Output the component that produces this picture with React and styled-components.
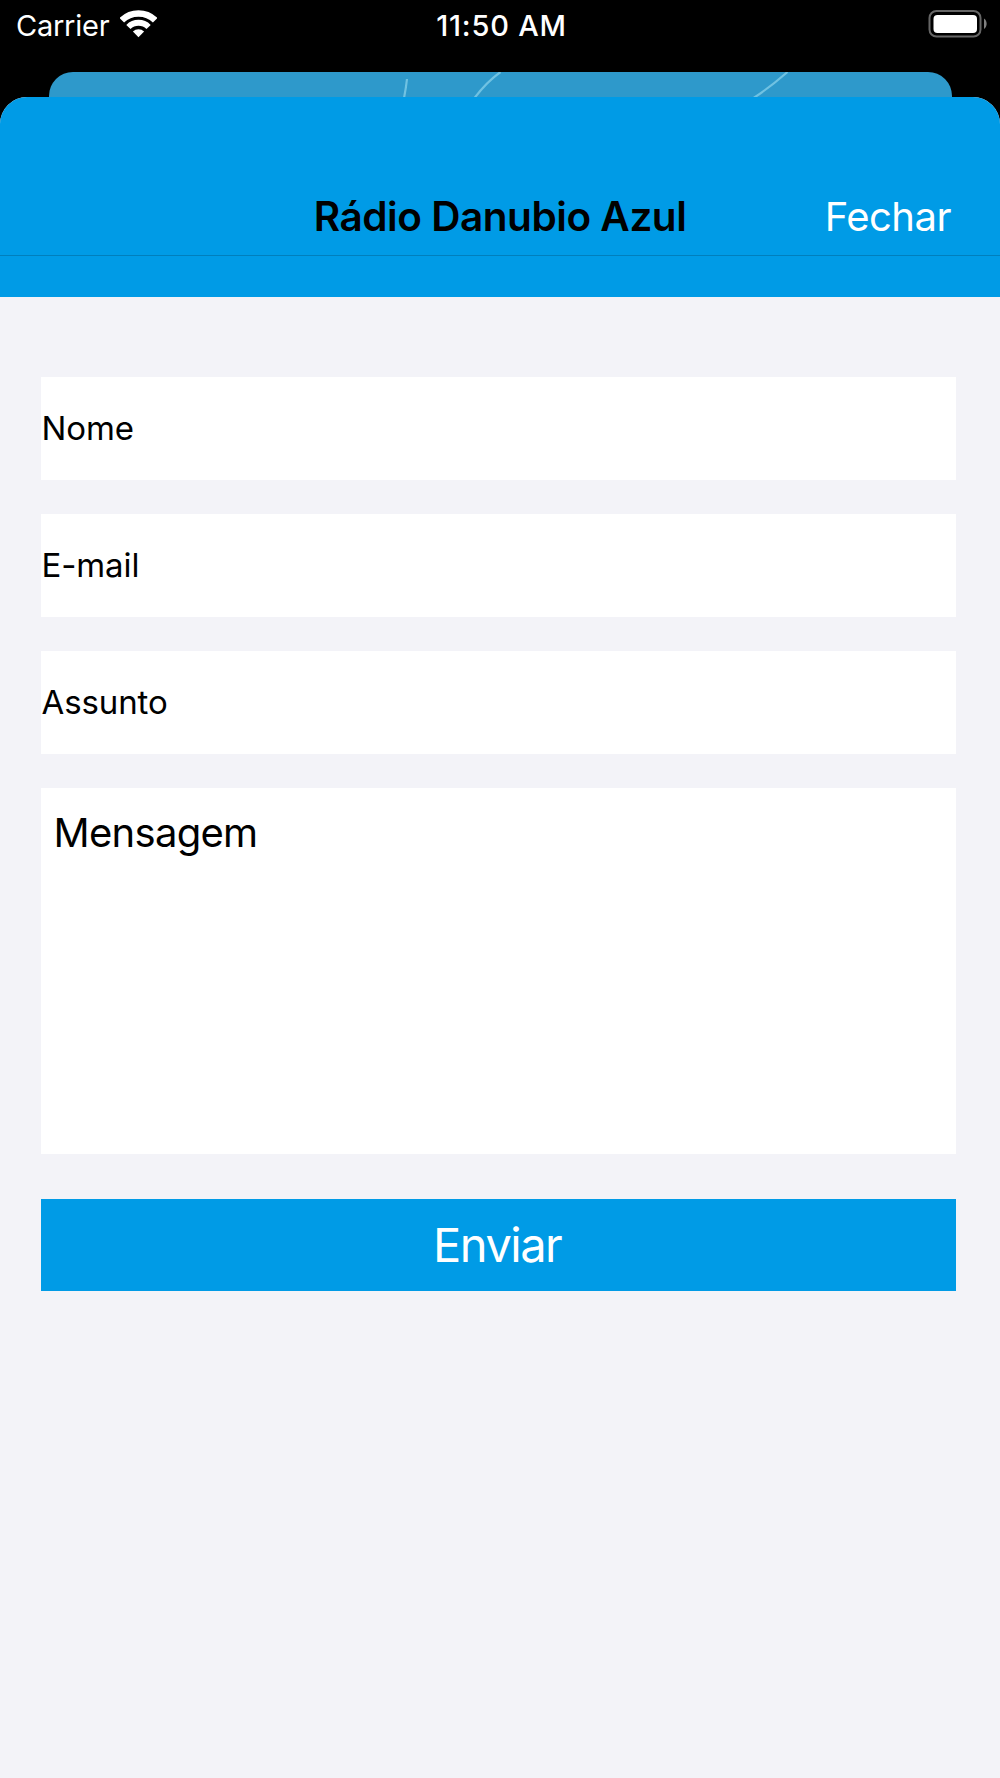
import React from 'react';
import styled, { createGlobalStyle } from 'styled-components';

const GlobalStyle = createGlobalStyle`
  * {
    box-sizing: border-box;
  }

  body {
    margin: 0;
    background-color: #000;
    font-family: Inter, "Liberation Sans", sans-serif;
  }
`;

const Screen = styled.div`
  display: flex;
  flex-direction: column;
  width: 1000px;
  height: 1778px;
  overflow: hidden;
  background-color: #000;
`;

const StatusBar = styled.header`
  display: grid;
  grid-template-columns: 1fr auto 1fr;
  align-items: center;
  height: 72px;
  padding: 1px 13px 22px 16px;
  color: #fff;
`;

const StatusGroup = styled.div`
  display: flex;
  align-items: center;
  justify-content: ${props => props.align || 'flex-start'};
  gap: 11px;

  svg {
    margin-bottom: 3px;
  }
`;

const StatusText = styled.span`
  font-size: 29px;
  line-height: 36px;
  font-weight: ${props => props.weight || 400};
  letter-spacing: ${props => props.spacing || '-0.25px'};
`;

const BackCard = styled.div`
  height: 25px;
  margin: 0 48.5px;
  border-radius: 24px 24px 0 0;
  background-color: #2e99cb;
  overflow: hidden;

  svg {
    display: block;
  }
`;

const Sheet = styled.main`
  flex: 1;
  border-radius: 27px 27px 0 0;
  background-color: #f3f3f8;
  overflow: hidden;
`;

const NavBar = styled.div`
  display: grid;
  grid-template-columns: 1fr auto 1fr;
  align-items: end;
  height: 159px;
  padding: 0 49px 14px;
  border-bottom: 1px solid #007fbd;
  background-color: #009be6;
`;

const NavTitle = styled.h1`
  grid-column: 2;
  margin: 0;
  color: #000;
  font-size: 40.5px;
  line-height: 48px;
  font-weight: 600;
  letter-spacing: -0.45px;
`;

const CloseButton = styled.button`
  justify-self: end;
  border: 0;
  padding: 0;
  background: none;
  color: #fff;
  font-family: inherit;
  font-size: 40px;
  line-height: 48px;
  letter-spacing: -0.5px;
`;

const NavFooter = styled.div`
  height: 41px;
  background-color: #009be6;
`;

const Form = styled.form`
  display: flex;
  flex-direction: column;
  gap: 34px;
  padding: 80px 43.7px 0 41px;
`;

const Field = styled.div`
  display: flex;
  align-items: center;
  height: 103px;
  padding: 0 0 1px 0.5px;
  background-color: #fff;
  color: #000;
  font-size: 33px;
  line-height: 40px;
  letter-spacing: -0.1px;
`;

const MessageField = styled.div`
  height: 366px;
  padding: 21px 12.5px;
  background-color: #fff;
  color: #000;
  font-size: 40px;
  line-height: 48px;
  letter-spacing: -0.7px;
`;

const SubmitButton = styled.button`
  height: 91.7px;
  margin-top: 11px;
  border: 0;
  padding: 0 3px 0 0;
  background-color: #009be6;
  color: #fff;
  font-family: inherit;
  font-size: 47px;
  line-height: 56px;
  letter-spacing: -1.5px;
`;

const fields = [
  { name: 'nome', label: 'Nome' },
  { name: 'email', label: 'E-mail' },
  { name: 'assunto', label: 'Assunto' }
];

function WifiIcon() {
  return (
    <svg width="37" height="28" viewBox="0 0 37 28" fill="none" stroke="#fff">
      <path d="M1.8 10.3A23.75 23.75 0 0 1 35.2 10.3" strokeWidth="6.5" />
      <path d="M8.4 17A14.3 14.3 0 0 1 28.6 17" strokeWidth="6" />
      <path d="M18.5 27.3L12.9 21.6A8 8 0 0 1 24.1 21.6Z" fill="#fff" stroke="none" />
    </svg>
  );
}

function BatteryIcon() {
  return (
    <svg width="59" height="28" viewBox="0 0 59 28" fill="none">
      <rect x="1.5" y="1" width="51" height="25.5" rx="7" stroke="#666" strokeWidth="2" />
      <rect x="5.5" y="5" width="43.5" height="18" rx="4" fill="#fff" />
      <path d="M56 8.5C59.5 10.5 59.5 17 56 19Z" fill="#808080" />
    </svg>
  );
}

function App() {
  return (
    <>
      <GlobalStyle />
      <Screen>
        <StatusBar>
          <StatusGroup>
            <StatusText>Carrier</StatusText>
            <WifiIcon />
          </StatusGroup>
          <StatusText weight={500} spacing="0.8px">11:50 AM</StatusText>
          <StatusGroup align="flex-end">
            <BatteryIcon />
          </StatusGroup>
        </StatusBar>

        {/* Strip of the previous screen showing above the sheet */}
        <BackCard>
          <svg width="903" height="25" viewBox="48.5 72 903 25" fill="none" stroke="#70c2e2" strokeWidth="2.2">
            <path d="M406.5 79Q405.5 88 403.5 98" />
            <path d="M474 98Q486 82 500 72" />
            <path d="M753 98Q770 87 787 72" />
          </svg>
        </BackCard>

        <Sheet>
          <NavBar>
            <NavTitle>Rádio Danubio Azul</NavTitle>
            <CloseButton>Fechar</CloseButton>
          </NavBar>
          <NavFooter />
          <Form>
            {fields.map(field => (
              <Field key={field.name}>{field.label}</Field>
            ))}
            <MessageField>Mensagem</MessageField>
            <SubmitButton type="button">Enviar</SubmitButton>
          </Form>
        </Sheet>
      </Screen>
    </>
  );
}

export default App;
